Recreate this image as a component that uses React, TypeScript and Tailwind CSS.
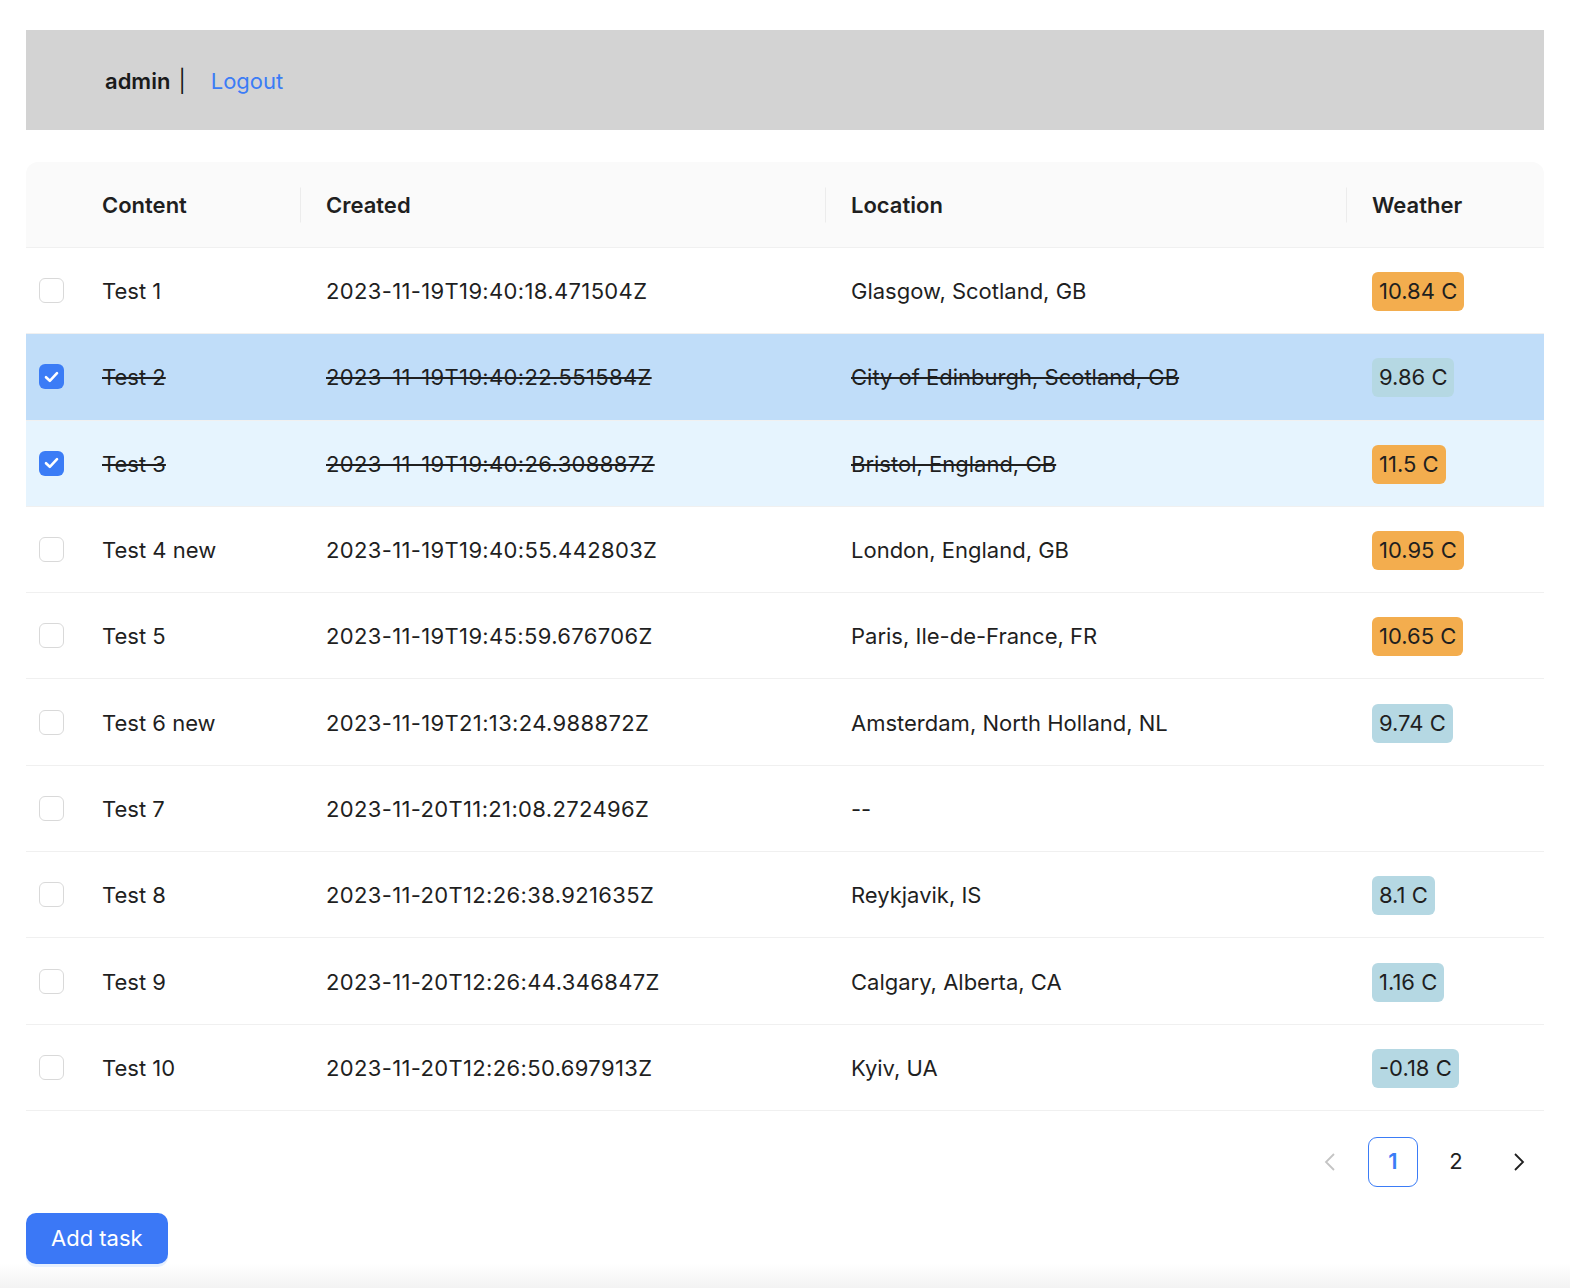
import React from "react";

type Task = {
  id: number;
  content: string;
  created: string;
  location: string;
  temp?: number;
  done: boolean;
};

const tasks: Task[] = [
  { id: 1, content: "Test 1", created: "2023-11-19T19:40:18.471504Z", location: "Glasgow, Scotland, GB", temp: 10.84, done: false },
  { id: 2, content: "Test 2", created: "2023-11-19T19:40:22.551584Z", location: "City of Edinburgh, Scotland, GB", temp: 9.86, done: true },
  { id: 3, content: "Test 3", created: "2023-11-19T19:40:26.308887Z", location: "Bristol, England, GB", temp: 11.5, done: true },
  { id: 4, content: "Test 4 new", created: "2023-11-19T19:40:55.442803Z", location: "London, England, GB", temp: 10.95, done: false },
  { id: 5, content: "Test 5", created: "2023-11-19T19:45:59.676706Z", location: "Paris, Ile-de-France, FR", temp: 10.65, done: false },
  { id: 6, content: "Test 6 new", created: "2023-11-19T21:13:24.988872Z", location: "Amsterdam, North Holland, NL", temp: 9.74, done: false },
  { id: 7, content: "Test 7", created: "2023-11-20T11:21:08.272496Z", location: "--", done: false },
  { id: 8, content: "Test 8", created: "2023-11-20T12:26:38.921635Z", location: "Reykjavik, IS", temp: 8.1, done: false },
  { id: 9, content: "Test 9", created: "2023-11-20T12:26:44.346847Z", location: "Calgary, Alberta, CA", temp: 1.16, done: false },
  { id: 10, content: "Test 10", created: "2023-11-20T12:26:50.697913Z", location: "Kyiv, UA", temp: -0.18, done: false },
];

function Checkbox({ checked }: { checked: boolean }) {
  if (checked) {
    return (
      <span className="flex h-[25px] w-[25px] items-center justify-center rounded-[6px] bg-[#3b7cf6]">
        <svg width="15" height="12" viewBox="0 0 15 12" fill="none">
          <path d="M2 6.2 L5.8 9.8 L13 2.2" stroke="white" strokeWidth="2.6" strokeLinecap="round" strokeLinejoin="round" />
        </svg>
      </span>
    );
  }
  return <span className="block h-[25px] w-[25px] rounded-[6px] border border-[#d9d9d9] bg-white" />;
}

function WeatherTag({ temp }: { temp?: number }) {
  if (temp === undefined) return null;
  const warm = temp >= 10;
  return (
    <span
      className={
        "inline-block rounded-[6px] px-[7px] leading-[39px] " +
        (warm ? "bg-[#f3ad4e]" : "bg-[#b5d8e3]")
      }
    >
      {temp} C
    </span>
  );
}

export default function App() {
  return (
    <div
      className="relative min-h-[1288px] bg-white pt-[30px] pl-[26px] pr-[26px] text-[22px] text-[#1f1f1f]"
      style={{ fontFamily: "Inter, 'Noto Sans', sans-serif" }}
    >
      {/* Top bar */}
      <div className="flex h-[100px] items-center bg-[#d3d3d3] pl-[79px] pt-[2px]">
        <span className="font-semibold text-[#1a1a1a]">admin</span>
        <span className="ml-[8px] text-[#1a1a1a]">|</span>
        <span className="ml-[25px] text-[#3b7cf6]">Logout</span>
      </div>

      {/* Table */}
      <table className="mt-[32px] w-full table-fixed border-separate border-spacing-0">
        <colgroup>
          <col className="w-[50px]" />
          <col className="w-[224px]" />
          <col className="w-[525px]" />
          <col className="w-[521px]" />
          <col />
        </colgroup>
        <thead>
          <tr className="h-[86px] bg-[#fafafa] text-left">
            <th className="rounded-tl-[12px] border-b border-[#f0f0f0]" />
            <th className="border-b border-[#f0f0f0] px-[26px] pt-[2px] font-semibold">Content</th>
            <th className="relative border-b border-[#f0f0f0] px-[26px] pt-[2px] font-semibold">
              <span className="absolute left-0 top-1/2 h-[35px] w-px -translate-y-1/2 bg-[#ececec]" />
              Created
            </th>
            <th className="relative border-b border-[#f0f0f0] px-[26px] pt-[2px] font-semibold">
              <span className="absolute left-0 top-1/2 h-[35px] w-px -translate-y-1/2 bg-[#ececec]" />
              Location
            </th>
            <th className="relative rounded-tr-[12px] border-b border-[#f0f0f0] px-[26px] pt-[2px] font-semibold">
              <span className="absolute left-0 top-1/2 h-[35px] w-px -translate-y-1/2 bg-[#ececec]" />
              Weather
            </th>
          </tr>
        </thead>
        <tbody>
          {tasks.map((t) => {
            const bg = t.id === 2 ? "bg-[#c0ddf9]" : t.done ? "bg-[#e6f4fe]" : "bg-white";
            const strike = t.done ? "line-through" : "";
            return (
              <tr key={t.id} className={"h-[86.3px] " + bg}>
                <td className="border-b border-[#f0f0f0]">
                  <div className="flex justify-center">
                    <Checkbox checked={t.done} />
                  </div>
                </td>
                <td className={"border-b border-[#f0f0f0] px-[26px] pt-[2px] " + strike}>{t.content}</td>
                <td className={"border-b border-[#f0f0f0] px-[26px] pt-[2px] tracking-[0.35px] " + strike}>{t.created}</td>
                <td className={"border-b border-[#f0f0f0] px-[26px] pt-[2px] " + strike}>{t.location}</td>
                <td className="border-b border-[#f0f0f0] px-[26px] pt-[2px]">
                  <WeatherTag temp={t.temp} />
                </td>
              </tr>
            );
          })}
        </tbody>
      </table>

      {/* Pagination */}
      <div className="mt-[26px] flex items-center justify-end gap-[13px]">
        <span className="flex h-[50px] w-[50px] items-center justify-center text-[#c4c4c4]">
          <svg width="14" height="20" viewBox="0 0 14 20" fill="none">
            <path d="M11 2 L3 10 L11 18" stroke="currentColor" strokeWidth="1.8" />
          </svg>
        </span>
        <span className="flex h-[50px] w-[50px] items-center justify-center rounded-[9px] border border-[#3b7cf6] font-semibold text-[#3b7cf6]">
          1
        </span>
        <span className="flex h-[50px] w-[50px] items-center justify-center">2</span>
        <span className="flex h-[50px] w-[50px] items-center justify-center text-[#1f1f1f]">
          <svg width="14" height="20" viewBox="0 0 14 20" fill="none">
            <path d="M3 2 L11 10 L3 18" stroke="currentColor" strokeWidth="1.8" />
          </svg>
        </span>
      </div>

      {/* Add task */}
      <button className="relative z-10 mt-[26px] h-[51px] rounded-[10px] bg-[#3b78f6] px-[25px] text-white shadow-[0_3px_0_#e6f0fe]">
        Add task
      </button>

      <div className="absolute bottom-0 left-0 right-0 h-[24px] bg-gradient-to-b from-white to-[#f3f3f3]" />
    </div>
  );
}
